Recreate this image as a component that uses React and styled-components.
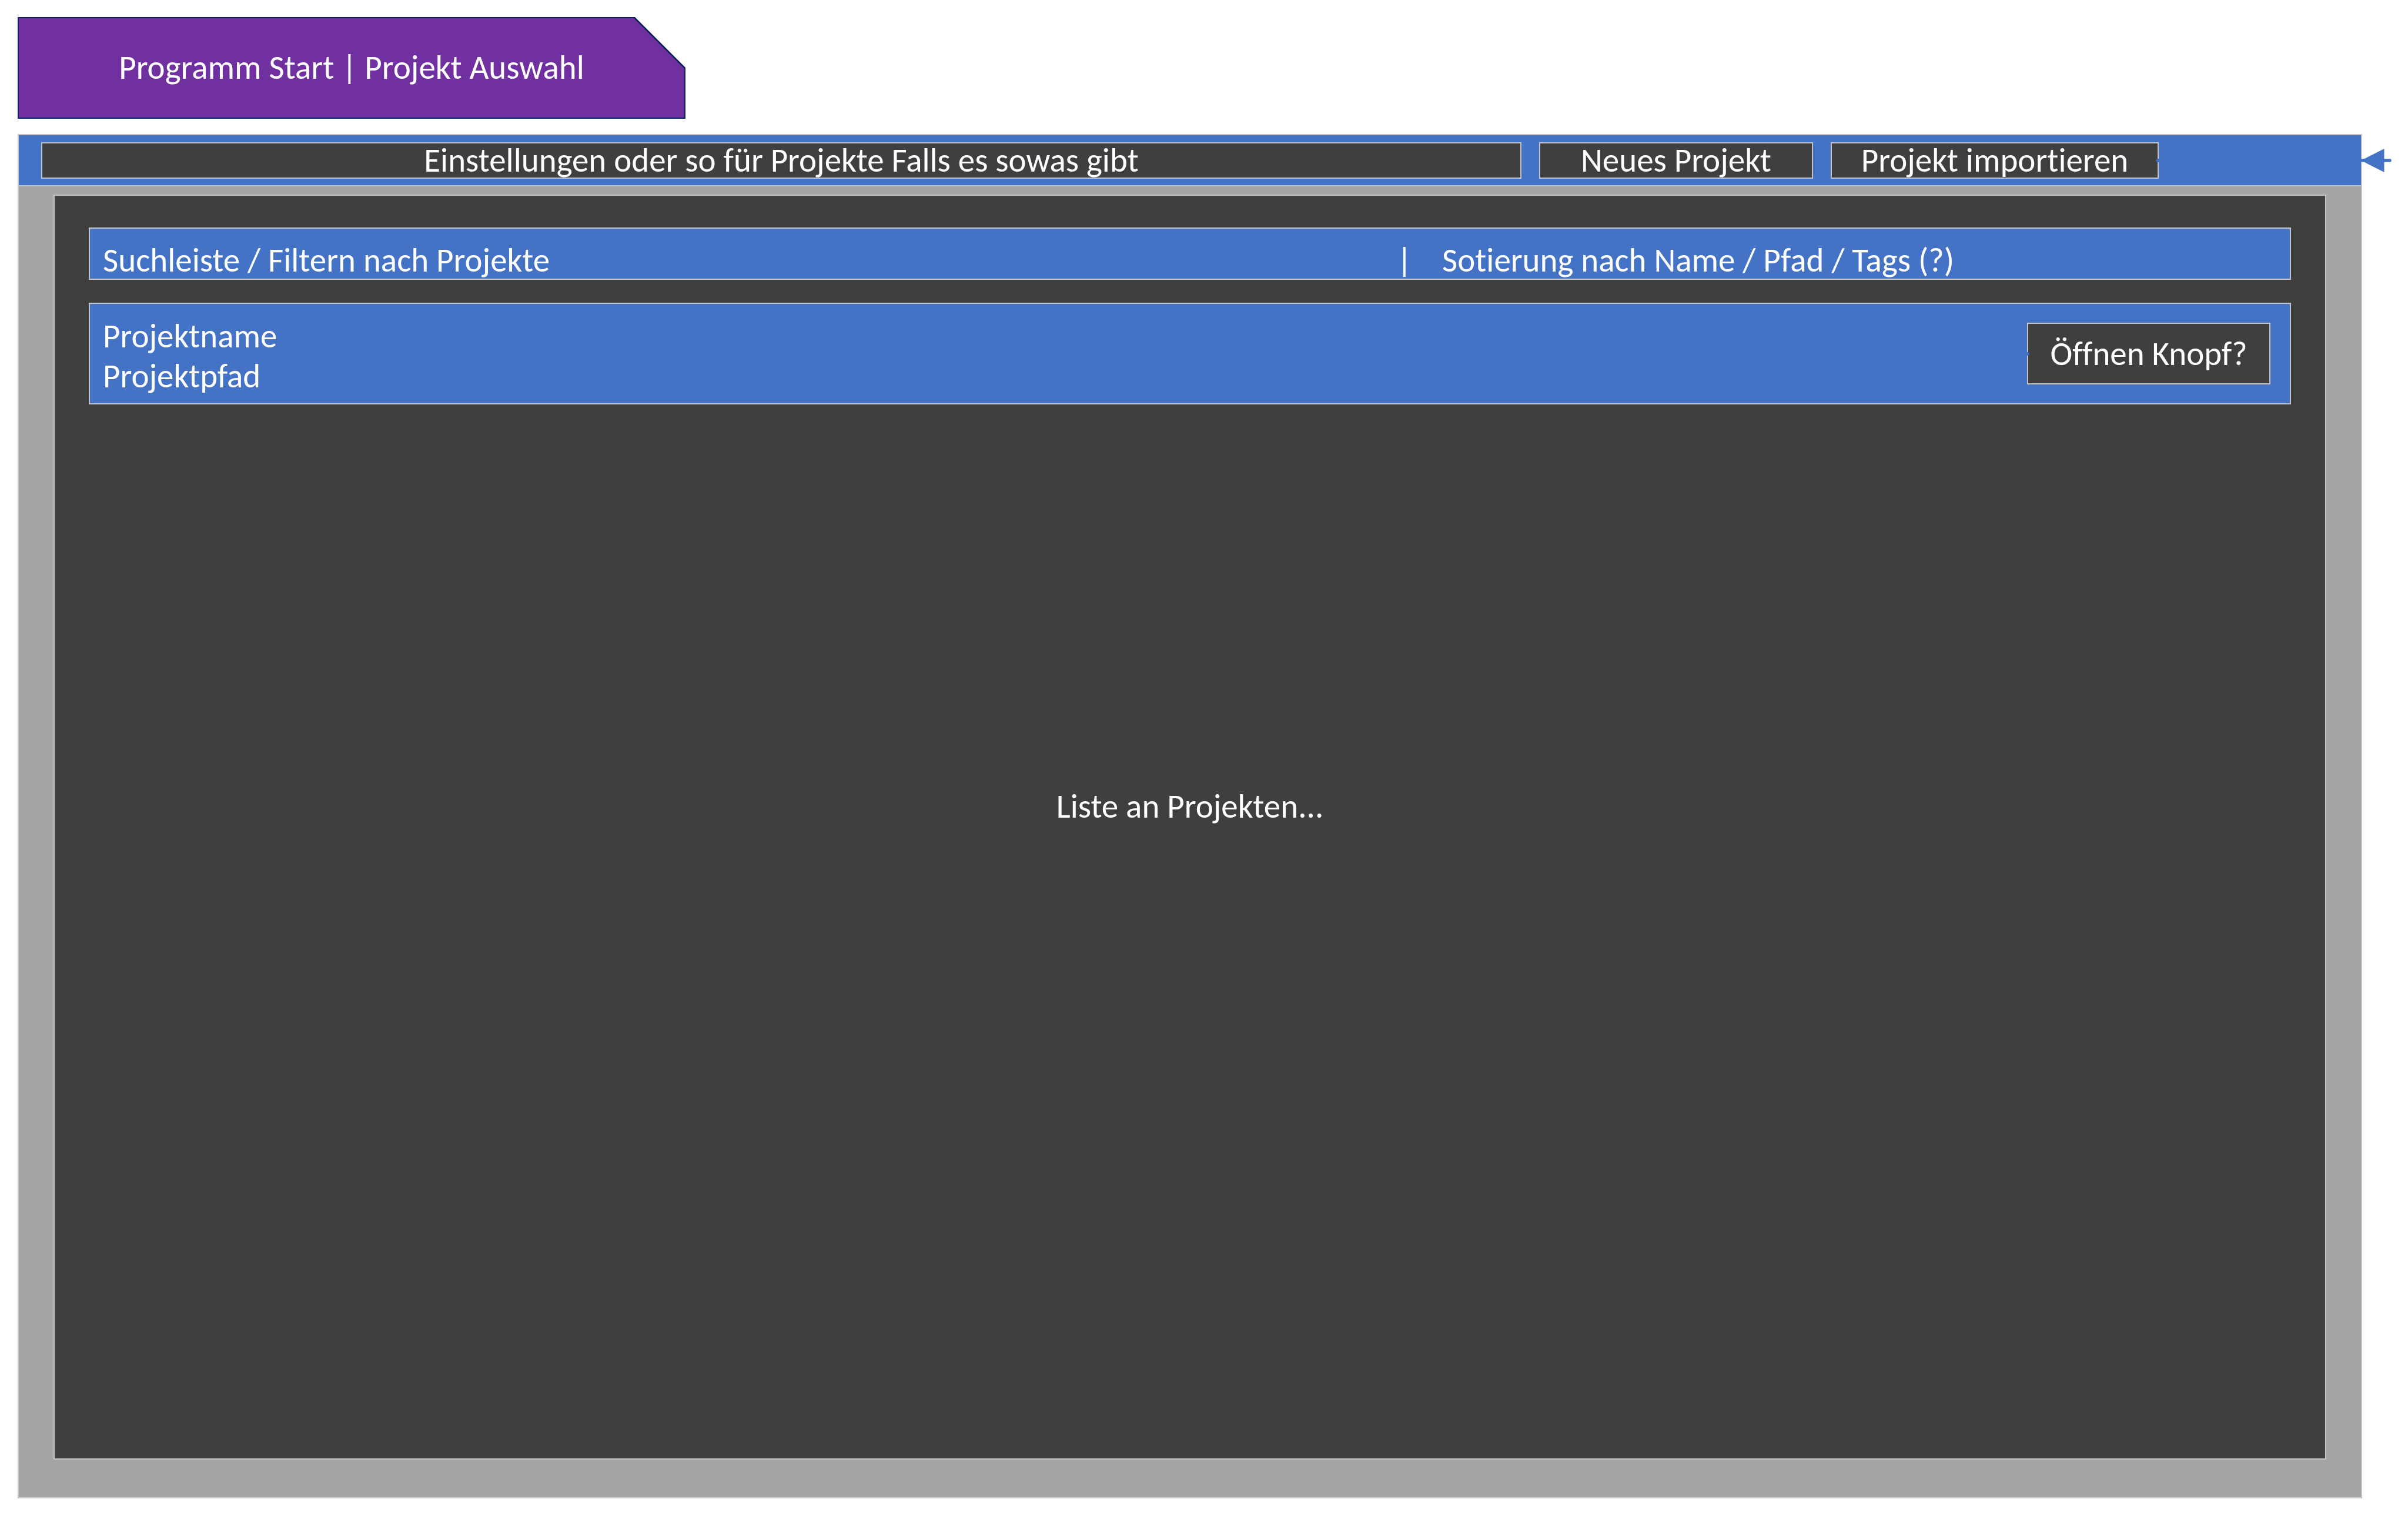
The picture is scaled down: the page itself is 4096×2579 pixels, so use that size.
import React from "react";
import styled, { createGlobalStyle, css } from "styled-components";

const color = {
  blue: "#4472c4",
  dark: "#3f3f3f",
  grey: "#a5a5a5",
  line: "#c4c4c4",
  purple: "#7030a0",
  navy: "#0b1f62",
  text: "#ffffff",
};

const GlobalStyle = createGlobalStyle`
  *, *::before, *::after { box-sizing: border-box; }
  body { margin: 0; background: #ffffff; }
  body, button, input, select {
    font-family: Calibri, Carlito, Lato, sans-serif;
    font-size: 57px;
    font-variant-ligatures: none;
    line-height: 68px;
    color: ${color.text};
  }
`;

const outlined = css`
  border: 2px solid ${color.line};
`;

const Page = styled.div`
  display: flex;
  flex-direction: column;
  align-items: flex-start;
  gap: 26px;
  min-height: 100vh;
  padding: 29px 78px 30px 30px;
`;

const cutCorner = css`
  clip-path: polygon(0 0, calc(100% - 86px) 0, 100% 86px, 100% 100%, 0 100%);
`;

const TitleTag = styled.h1`
  ${cutCorner}
  width: 1136px;
  margin: 0;
  padding: 2px;
  background: ${color.navy};
  font-size: inherit;
  font-weight: 400;
  text-align: center;
`;

const TitleFace = styled.span`
  ${cutCorner}
  display: block;
  padding: 50px 0 51px;
  background: ${color.purple};
`;

const Window = styled.main`
  display: flex;
  flex: 1;
  flex-direction: column;
  align-self: stretch;
  background: ${color.grey};
  ${outlined}
`;

const Toolbar = styled.header`
  position: relative;
  display: flex;
  align-items: center;
  gap: 30px;
  height: 87px;
  padding: 0 344px 0 38px;
  background: ${color.blue};
  border-bottom: 2px solid ${color.line};
`;

const Button = styled.button`
  position: relative;
  display: flex;
  flex: ${(p) => (p.$grow ? "1" : "none")};
  align-items: center;
  justify-content: center;
  width: ${(p) => p.$width || "auto"};
  height: ${(p) => (p.$tall ? "105px" : "62px")};
  padding: 0;
  background: ${color.dark};
  border-radius: 0;
  white-space: nowrap;
  cursor: pointer;
  ${outlined}
`;

const LineEnd = styled.span`
  position: absolute;
  top: calc(50% - 3px);
  ${(p) => (p.$side === "right" ? "right: -4px;" : "left: -4px;")}
  width: 6px;
  height: 6px;
  background: ${color.blue};
  border-radius: ${(p) => (p.$side === "right" ? "3px 0 0 3px" : "0 3px 3px 0")};
`;

const Arrow = styled.svg`
  position: absolute;
  top: 23px;
  left: 100%;
  width: 52px;
  height: 40px;
  overflow: visible;
`;

const Content = styled.section`
  display: flex;
  flex: 1;
  flex-direction: column;
  gap: 39px;
  margin: 14px 59px 64px;
  padding: 54px 58px;
  background: ${color.dark};
  ${outlined}
`;

const SearchBar = styled.form`
  display: grid;
  grid-template-columns: 2196fr 1516fr;
  height: 89px;
  padding: 20px 0 0 22px;
  background: ${color.blue};
  ${outlined}
`;

const SearchInput = styled.input`
  min-width: 0;
  height: 68px;
  padding: 0;
  background: transparent;
  border: 0;
  outline: 0;

  &::placeholder {
    color: ${color.text};
    opacity: 1;
  }
`;

const SortField = styled.label`
  display: flex;
  gap: 51px;
`;

const SortSelect = styled.select`
  flex: 1;
  height: 68px;
  padding: 0;
  appearance: none;
  background: transparent;
  border: 0;
  outline: 0;
`;

const ProjectList = styled.ul`
  margin: 0;
  padding: 0;
  list-style: none;
`;

const Project = styled.li`
  display: flex;
  align-items: center;
  justify-content: space-between;
  height: 173px;
  padding: 0 33px 0 22px;
  background: ${color.blue};
  ${outlined}
`;

const ProjectText = styled.div`
  padding-top: 8px;
`;

const ProjectLine = styled.p`
  margin: 0;
`;

const ListHint = styled.p`
  display: flex;
  flex: 1;
  align-items: center;
  justify-content: center;
  margin: 0;
  padding-bottom: 410px;
`;

const projects = [{ name: "Projektname", path: "Projektpfad" }];

export default function App() {
  return (
    <>
      <GlobalStyle />
      <Page>
        <TitleTag>
          <TitleFace>Programm Start | Projekt Auswahl</TitleFace>
        </TitleTag>
        <Window>
          <Toolbar>
            <Button type="button" $grow>
              Einstellungen oder so für Projekte Falls es sowas gibt
            </Button>
            <Button type="button" $width="466px">
              Neues Projekt
            </Button>
            <Button type="button" $width="558px">
              Projekt importieren
              <LineEnd $side="right" />
            </Button>
            <Arrow viewBox="0 0 52 40" aria-hidden="true">
              <path
                d="M-2 20H49"
                stroke={color.blue}
                strokeWidth="5.5"
                strokeLinecap="round"
              />
              <path d="M0 20L39.5 0V40Z" fill={color.blue} />
            </Arrow>
          </Toolbar>
          <Content>
            <SearchBar onSubmit={(e) => e.preventDefault()}>
              <SearchInput
                type="text"
                aria-label="Suchleiste / Filtern nach Projekte"
                placeholder="Suchleiste / Filtern nach Projekte"
              />
              <SortField>
                <span aria-hidden="true">|</span>
                <SortSelect aria-label="Sotierung nach Name / Pfad / Tags (?)">
                  <option>Sotierung nach Name / Pfad / Tags (?)</option>
                </SortSelect>
              </SortField>
            </SearchBar>
            <ProjectList>
              {projects.map((project) => (
                <Project key={project.path}>
                  <ProjectText>
                    <ProjectLine>{project.name}</ProjectLine>
                    <ProjectLine>{project.path}</ProjectLine>
                  </ProjectText>
                  <Button type="button" $tall $width="414px">
                    Öffnen Knopf?
                    <LineEnd $side="left" />
                  </Button>
                </Project>
              ))}
            </ProjectList>
            <ListHint>Liste an Projekten...</ListHint>
          </Content>
        </Window>
      </Page>
    </>
  );
}
